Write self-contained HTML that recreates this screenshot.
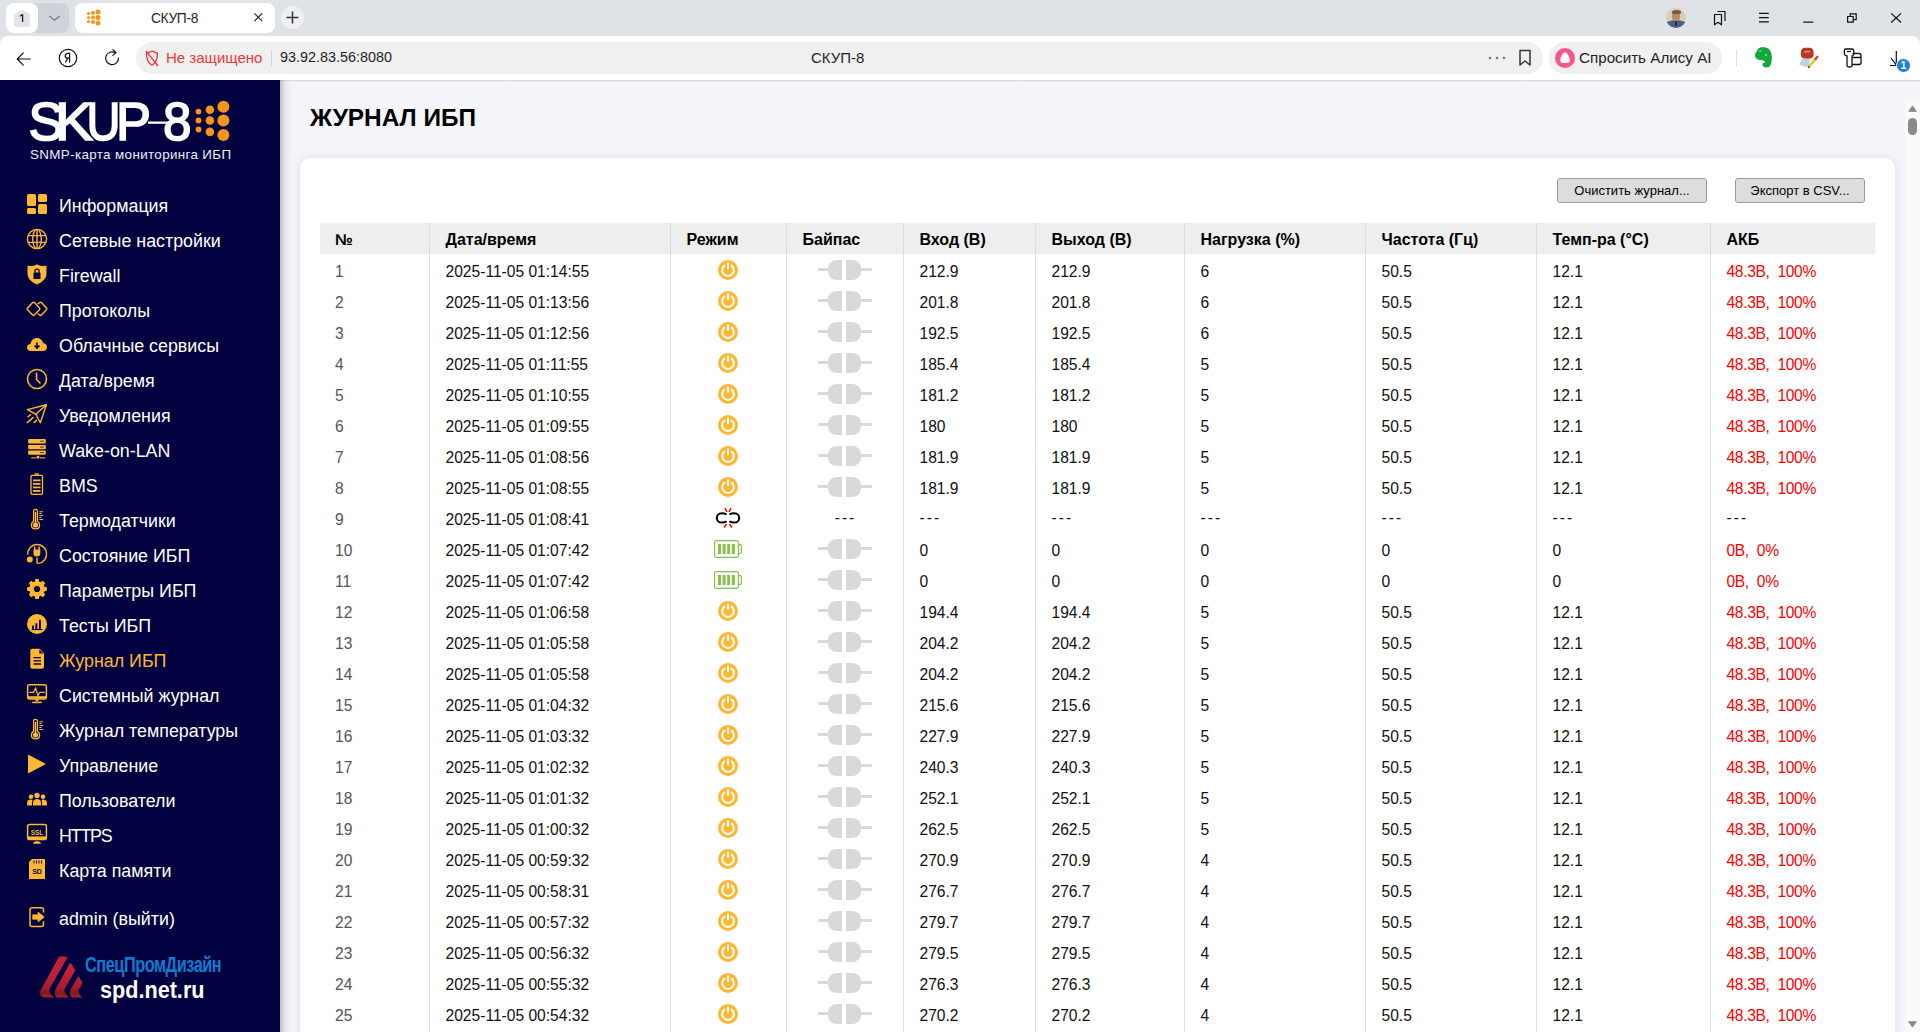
<!DOCTYPE html>
<html><head><meta charset="utf-8">
<style>
*{box-sizing:border-box;margin:0;padding:0}
html,body{width:1920px;height:1032px;overflow:hidden;font-family:"Liberation Sans",sans-serif;background:#fff}
.abs{position:absolute}
/* browser chrome */
#tabbar{position:absolute;left:0;top:0;width:1920px;height:36px;background:#dfe2e7}
#addr{position:absolute;left:0;top:36px;width:1920px;height:44px;background:#fff;border-radius:8px 8px 0 0}
.pill{position:absolute;background:#f0f0f0;border-radius:16px}
.ctext{position:absolute;font-size:15px;color:#1f1f1f;white-space:nowrap;line-height:17px}
/* sidebar */
#side{position:absolute;left:0;top:80px;width:280px;height:952px;background:#010140}
#main{position:absolute;left:280px;top:80px;width:1640px;height:952px;background:#f4f5fa;overflow:hidden}
#shadowL{position:absolute;left:0;top:0;width:12px;height:952px;background:linear-gradient(to right,rgba(0,0,0,0.22),rgba(0,0,0,0.06) 40%,rgba(0,0,0,0))}
#shadowT{position:absolute;left:0;top:0;width:1640px;height:2px;background:linear-gradient(to bottom,rgba(0,0,0,0.11) 0 1px,rgba(0,0,0,0.03) 1px 2px)}
#scroll{position:absolute;left:1905px;top:100px;width:15px;height:932px;background:#fafafa}
.mi{position:absolute;left:0;width:280px;height:35px}
.mi svg{position:absolute;left:26px;top:6px}
.mi span{position:absolute;left:59px;top:8.5px;font-size:17.85px;line-height:20px;color:#fff;white-space:nowrap}
.mi.act span{color:#fdb733}
/* card */
h1{position:absolute;left:30px;top:24px;font-size:24.4px;font-weight:bold;color:#000;line-height:28px;letter-spacing:0px}
#card{position:absolute;left:20px;top:78px;width:1595px;height:900px;background:#fff;border-radius:10px;box-shadow:0 0 10px rgba(0,0,0,0.10)}
.btn{position:absolute;top:20px;height:25px;background:#dddddd;border:1px solid #9a9a9a;border-radius:3px;font-size:13px;color:#000;text-align:center;line-height:23px;white-space:nowrap}
table{position:absolute;left:20px;top:65px;border-collapse:collapse;table-layout:fixed;width:1555px}
th{background:#eeeeee;height:31px;font-size:16px;font-weight:bold;text-align:left;padding:3px 0 0 16px;color:#000;border-left:1px solid #dddddd;white-space:nowrap}
td{height:31px;font-size:15.6px;text-align:left;padding:4px 0 0 16px;color:#111;border-left:1px solid #dddddd;white-space:nowrap}
th:first-child,td:first-child{border-left:none;padding-left:15px}
td.c1{color:#555}
td.cc{text-align:center;padding:0}
td.akb{color:#f00;letter-spacing:-0.35px}
td.akb.blk{color:#111}
svg.pw,svg.bat,svg.brk{display:block;margin:0 auto}
.plug{display:block;position:relative;width:54px;height:20px;margin:0 auto}
.plug b{position:absolute;background:#d9d9d9}
.plug .l1{left:0;top:8.3px;width:11px;height:3.4px}
.plug .l2{left:43px;top:8.3px;width:11px;height:3.4px}
.plug .h1{left:10.4px;top:0;width:14.6px;height:20px;border-radius:9px 0 0 9px/8px 0 0 8px}
.plug .h2{left:28.8px;top:0;width:15.2px;height:20px;border-radius:0 9px 9px 0/0 8px 8px 0}
.dsh{letter-spacing:2px;position:relative;top:-2px}
td.cc .dsh{margin-right:-2px;top:0px}
</style></head><body>
<div id="tabbar">
  <div class="abs" style="left:6px;top:3px;width:63px;height:30px;background:#cfd2d8;border-radius:8px"></div>
  <div class="abs" style="left:6px;top:3px;width:32px;height:30px;background:#fff;border-radius:8px"></div>
  <svg class="abs" style="left:13px;top:9px" width="18" height="19" viewBox="0 0 18 19"><path d="M9 0.8L15.5 4.2Q17 5 17 6.8V15.5Q17 18 14.5 18H3.5Q1 18 1 15.5V6.8Q1 5 2.5 4.2Z" fill="#e3e5e9"/></svg>
  <svg class="abs" style="left:14px;top:10px" width="16" height="17" viewBox="0 0 16 17"><path d="M8.6 4.2V12M8.6 4.4L6 6.2" fill="none" stroke="#222" stroke-width="1.3"/></svg>
  <svg class="abs" style="left:48px;top:14px" width="13" height="8" viewBox="0 0 13 8"><path d="M1.2 2L6.5 6.2L11.8 2" fill="none" stroke="#777a80" stroke-width="1.3"/></svg>
  <div class="abs" style="left:75px;top:3px;width:200px;height:30px;background:#fff;border-radius:8px"></div>
  <svg class="abs" style="left:86px;top:9px" width="17" height="17" viewBox="0 0 17 17">
    <g fill="#f7941d"><circle cx="2.5" cy="4.5" r="1.6"/><circle cx="2.5" cy="8.5" r="1.6"/><circle cx="2.5" cy="12.5" r="1.6"/><circle cx="7" cy="4" r="2"/><circle cx="7" cy="8.5" r="2"/><circle cx="7" cy="13" r="2"/><circle cx="12" cy="3" r="2.5"/><circle cx="12" cy="8.5" r="2.5"/><circle cx="12" cy="14" r="2.5"/></g></svg>
  <div class="ctext" style="left:151px;top:10px;font-size:13.8px;letter-spacing:-0.35px">СКУП-8</div>
  <svg class="abs" style="left:252px;top:11px" width="13" height="13" viewBox="0 0 13 13"><path d="M2.4 2.4L10.2 10.2M10.2 2.4L2.4 10.2" stroke="#222" stroke-width="1.2"/></svg>
  <div class="abs" style="left:281px;top:6px;width:23px;height:23px;background:#eef0f3;border-radius:50%"></div>
  <svg class="abs" style="left:285px;top:10px" width="15" height="15" viewBox="0 0 15 15"><path d="M7.5 1.5V13.5M1.5 7.5H13.5" stroke="#333" stroke-width="1.5"/></svg>
  <!-- right window controls -->
  <div class="abs" style="left:1666px;top:8px;width:20px;height:20px;border-radius:50%;overflow:hidden;background:#d8cdb8">
    <div class="abs" style="left:-2px;top:12px;width:24px;height:12px;border-radius:50% 50% 0 0;background:#4d5c86"></div>
    <div class="abs" style="left:6px;top:3px;width:8px;height:10px;border-radius:45%;background:#b98a6c"></div>
    <div class="abs" style="left:5.5px;top:2px;width:9px;height:4px;border-radius:50% 50% 20% 20%;background:#7a5a3e"></div>
    <div class="abs" style="left:9px;top:13px;width:2px;height:5px;background:#2b2b3a"></div>
  </div>
  <svg class="abs" style="left:1710px;top:8px" width="20" height="20" viewBox="0 0 20 20"><path d="M4.5 6.5H11.5V16.8L8 14.3L4.5 16.8Z M7.5 3.5H15V13" fill="none" stroke="#111" stroke-width="1.2" stroke-linejoin="round"/></svg>
  <svg class="abs" style="left:1754px;top:8px" width="20" height="20" viewBox="0 0 20 20"><path d="M5 5.4H14.8M5 9.6H14.8M5 13.8H14.8" stroke="#111" stroke-width="1.2"/></svg>
  <svg class="abs" style="left:1798px;top:8px" width="20" height="20" viewBox="0 0 20 20"><path d="M5.3 14.1H15.2" stroke="#111" stroke-width="1.2"/></svg>
  <svg class="abs" style="left:1842px;top:8px" width="20" height="20" viewBox="0 0 20 20"><path d="M5.6 8.5H11.2V14.1H5.6Z M8.2 8.5V5.9H14.2V11.6H11.2" fill="none" stroke="#111" stroke-width="1.2"/></svg>
  <svg class="abs" style="left:1886px;top:8px" width="20" height="20" viewBox="0 0 20 20"><path d="M5.2 5.4L15 14.5M15 5.4L5.2 14.5" stroke="#111" stroke-width="1.2"/></svg>
</div>
<div class="abs" style="left:0;top:36px;width:1920px;height:14px;background:#dfe2e7"></div>
<div id="addr">
  <svg class="abs" style="left:16px;top:14px" width="18" height="18" viewBox="0 0 18 18"><path d="M1.2 9H14.8M7.6 2.6L1.2 9L7.6 15.4" fill="none" stroke="#111" stroke-width="1.2"/></svg>
  <svg class="abs" style="left:58px;top:12px" width="20" height="20" viewBox="0 0 20 20"><circle cx="10" cy="10" r="8.7" fill="none" stroke="#111" stroke-width="1.2"/><path d="M11.6 14.6V5.4H10C8.2 5.4 7.2 6.4 7.2 7.9C7.2 9.3 8.2 10.2 10 10.2H11.6M9.8 10.2L7.4 14.4" fill="none" stroke="#111" stroke-width="1.2"/></svg>
  <svg class="abs" style="left:104px;top:12px" width="18" height="20" viewBox="0 0 18 20"><path d="M14.4 9.6A6.4 6.4 0 1 1 11.4 4.8" fill="none" stroke="#111" stroke-width="1.2"/><path d="M8.6 1.4L12 4.8L8.4 7.6" fill="none" stroke="#111" stroke-width="1.2"/></svg>
  <div class="pill" style="left:136px;top:6px;width:1407px;height:32px"></div>
  <svg class="abs" style="left:143px;top:13px" width="18" height="19" viewBox="0 0 18 19"><path d="M9 2.2L14.5 4.3C14.6 10 13 13.8 9 16.2C5 13.8 3.4 10 3.5 4.3Z" fill="none" stroke="#f0353a" stroke-width="1.3"/><path d="M3 2L15 17" stroke="#f0353a" stroke-width="1.3"/></svg>
  <div class="ctext" style="left:166px;top:13px;color:#f0353a">Не защищено</div>
  <div class="abs" style="left:271px;top:14px;width:1px;height:16px;background:#d4d4d4"></div>
  <div class="ctext" style="left:280px;top:13px;font-size:14.4px;color:#1f1f1f">93.92.83.56:8080</div>
  <div class="ctext" style="left:811px;top:13px;font-size:15px;color:#1f1f1f">СКУП-8</div>
  <svg class="abs" style="left:1487px;top:20px" width="20" height="4" viewBox="0 0 20 4"><g fill="#777"><circle cx="3" cy="2" r="1.3"/><circle cx="10" cy="2" r="1.3"/><circle cx="17" cy="2" r="1.3"/></g></svg>
  <svg class="abs" style="left:1516px;top:12px" width="18" height="20" viewBox="0 0 18 20"><path d="M4 2.5H14V17L9 13L4 17Z" fill="none" stroke="#333" stroke-width="1.5" stroke-linejoin="round"/></svg>
  <div class="pill" style="left:1549px;top:6px;width:173px;height:32px"></div>
  <svg class="abs" style="left:1555px;top:12px" width="20" height="20" viewBox="0 0 20 20"><circle cx="10" cy="10" r="10" fill="#f7568e"/><path d="M10 4.3C7.5 4.3 5.2 10 5.2 12.5C5.2 14.5 7 15 10 15C13 15 14.8 14.5 14.8 12.5C14.8 10 12.5 4.3 10 4.3Z" fill="#fff"/></svg>
  <div class="ctext" style="left:1579px;top:13px;font-size:15.2px;color:#1f1f1f">Спросить Алису AI</div>
  <div class="abs" style="left:1736px;top:14px;width:1px;height:17px;background:#ddd"></div>
  <svg class="abs" style="left:1752px;top:10px" width="22" height="24" viewBox="0 0 22 24"><path d="M6.5 2.5C7.5 1.5 9 1.2 11 1.2C15.5 1.2 19.8 3.5 19.8 11C19.8 17 19 21.5 14.5 21.5C12 21.5 10.5 20.5 10.5 18.5C10.5 17 11.8 16.2 13.5 16.5C12.5 15 11.5 14 9 14C5.5 14 3 12 3 9.5C3 8 3.5 7 4.5 6.3Z" fill="#14a83a"/><path d="M4 6.5L7.5 6.5L7 2.7Z" fill="#0c7f2a"/><path d="M6.3 5.8C7.5 5 8.6 4.8 9.5 5" stroke="#fff" stroke-width="0.7" fill="none"/><circle cx="14" cy="9" r="0.8" fill="#fff"/></svg>
  <svg class="abs" style="left:1796px;top:10px" width="24" height="24" viewBox="0 0 24 24"><path d="M3 18.5L6.5 12.4H14L13 20.8H8.5Z" fill="#c5d0de"/><path d="M9 1.8H13.5C16 1.8 17.6 3.6 17.6 6.5V8.5C17.6 11 16 12.6 13.5 12.6H9C6.5 12.6 4.8 11 4.8 8.5V6.5C4.8 3.6 6.5 1.8 9 1.8Z" fill="#b43a22"/><path d="M8.5 6.5C10 5.5 12 5.2 14 6" stroke="#f0b8a0" stroke-width="1.2" fill="none"/><path d="M13 20.5L20 12.5" stroke="#e8c83a" stroke-width="2.8" stroke-linecap="round"/><path d="M19.5 13L21.3 11" stroke="#d8483e" stroke-width="2.6" stroke-linecap="round"/><circle cx="12.7" cy="21" r="0.9" fill="#444"/></svg>
  <svg class="abs" style="left:1840px;top:10px" width="24" height="24" viewBox="0 0 24 24"><path d="M5.5 3H12C13 3 13.8 3.8 13.8 4.8V8C13.8 9 13 9.6 12 10V19.5C12 20.5 11 21 9.5 21C8 21 7 20.5 7 19.5V10C5.5 9.6 4.4 9 4.4 8V4.8C4.4 3.8 4.8 3 5.5 3Z" fill="none" stroke="#111" stroke-width="1.3" stroke-linejoin="round"/><path d="M7 5.5H11" stroke="#111" stroke-width="1.2"/><path d="M12.5 7.5H19C20.2 7.5 21 8.3 21 9.5V16.5C21 17.7 20.2 18.5 19 18.5H12.2M12.2 11.5H21" fill="none" stroke="#111" stroke-width="1.3" stroke-linejoin="round"/></svg>
  <svg class="abs" style="left:1884px;top:10px" width="24" height="24" viewBox="0 0 24 24"><path d="M12.3 5V19M7 12L12.3 19L17 13.5M6 19.5H12" fill="none" stroke="#111" stroke-width="1.2"/></svg>
  <div class="abs" style="left:1896px;top:21.5px;width:15px;height:15px;border-radius:50%;background:#1a7fe0;border:1.2px solid #fff;color:#fff;font-size:10.5px;font-weight:bold;line-height:13px;text-align:center">1</div>
</div>

<div id="side">
<div class="abs" style="left:0;top:0;width:280px;height:90px">
<svg class="abs" style="left:0;top:0" width="190" height="70" viewBox="0 0 190 70"><g font-family="Liberation Sans" font-weight="normal" font-size="54" fill="#fff" stroke="#fff" stroke-width="1.7" stroke-linejoin="miter"><text x="28.5" y="60" textLength="35" lengthAdjust="spacingAndGlyphs">S</text><text x="55" y="60" textLength="38" lengthAdjust="spacingAndGlyphs">K</text><text x="86.5" y="60" textLength="34" lengthAdjust="spacingAndGlyphs">U</text><text x="116" y="60" textLength="35" lengthAdjust="spacingAndGlyphs">P</text><text x="163" y="60" textLength="28.5" lengthAdjust="spacingAndGlyphs">8</text></g><rect x="148" y="41.5" width="22" height="2.3" fill="#fff"/></svg>
<svg class="abs" style="left:190px;top:18px" width="45" height="45" viewBox="0 0 45 45"><g fill="#f7941d"><circle cx="8.5" cy="13.6" r="2.9"/><circle cx="8.5" cy="22.5" r="2.9"/><circle cx="8.5" cy="31.5" r="2.9"/><circle cx="19.9" cy="11.8" r="4.3"/><circle cx="19.9" cy="22.5" r="4.3"/><circle cx="19.9" cy="33.9" r="4.3"/><circle cx="33.4" cy="8.8" r="6"/><circle cx="33.4" cy="22.5" r="6"/><circle cx="33.4" cy="36.9" r="6"/></g></svg>
<div class="abs" style="left:30px;top:67px;font-size:13.4px;color:#eeeef6;line-height:15px;letter-spacing:0.36px;white-space:nowrap">SNMP-карта мониторинга ИБП</div>
</div>
<div class="mi" style="top:107px"><svg width="22" height="22" viewBox="0 0 22 22"><g fill="#fdb733"><rect x="1" y="1" width="9" height="12" rx="1.5"/><rect x="12" y="1" width="9" height="8" rx="1.5"/><rect x="1" y="15" width="9" height="6" rx="1.5"/><rect x="12" y="11" width="9" height="10" rx="1.5"/></g></svg><span>Информация</span></div>
<div class="mi" style="top:142px"><svg width="22" height="22" viewBox="0 0 22 22"><g fill="none" stroke="#fdb733" stroke-width="1.4"><circle cx="11" cy="11" r="9.6"/><ellipse cx="11" cy="11" rx="4.3" ry="9.6"/><path d="M11 1.4V20.6M2.3 7.6H19.7M2.3 14.4H19.7"/></g></svg><span>Сетевые настройки</span></div>
<div class="mi" style="top:177px"><svg width="22" height="22" viewBox="0 0 22 22"><path d="M11 1.2C13 2.8 16.5 3.2 20.5 2.8V10.5C20.5 15.5 16.5 19 11 21.5C5.5 19 1.5 15.5 1.5 10.5V2.8C5.5 3.2 9 2.8 11 1.2Z" fill="#fdb733"/><rect x="7.5" y="9.6" width="7" height="6.4" rx="0.6" fill="#010140"/><path d="M8.9 9.8V8.2C8.9 6.9 9.8 6.1 11 6.1C12.2 6.1 13.1 6.9 13.1 8.2V9.8" fill="none" stroke="#010140" stroke-width="1.3"/></svg><span>Firewall</span></div>
<div class="mi" style="top:212px"><svg width="22" height="22" viewBox="0 0 22 22"><g fill="none" stroke="#fdb733" stroke-width="1.5" stroke-linejoin="round" stroke-linecap="round"><path d="M6.6 4.6Q7.5 3.8 8.4 4.6L13.4 9.9Q14.2 10.8 13.4 11.7L8.4 17Q7.5 17.8 6.6 17L1.6 11.7Q0.8 10.8 1.6 9.9Z"/><path d="M12.2 5.6L13.6 4.6Q14.5 3.8 15.4 4.6L20.4 9.9Q21.2 10.8 20.4 11.7L15.4 17Q14.5 17.8 13.6 17L12.2 16"/></g></svg><span>Протоколы</span></div>
<div class="mi" style="top:247px"><svg width="22" height="22" viewBox="0 0 22 22"><path d="M5 18C2.5 18 1 16.5 1 14.5C1 12.5 2.5 11 4.5 11C5 7.5 7.5 5 11 5C14 5 16.5 7 17.2 10C19.5 10.2 21 12 21 14.2C21 16.5 19.5 18 17 18Z" fill="#fdb733"/><path d="M11 9.5V15M8.5 12.5L11 15L13.5 12.5" fill="none" stroke="#010140" stroke-width="1.6"/></svg><span>Облачные сервисы</span></div>
<div class="mi" style="top:282px"><svg width="22" height="22" viewBox="0 0 22 22"><g fill="none" stroke="#fdb733" stroke-width="1.6"><circle cx="11" cy="11" r="9.5"/><path d="M10.5 4.5V11.5L14.5 15.5"/></g></svg><span>Дата/время</span></div>
<div class="mi" style="top:317px"><svg width="22" height="22" viewBox="0 0 22 22"><g fill="none" stroke="#fdb733" stroke-width="1.4" stroke-linejoin="round" stroke-linecap="round"><path d="M1.3 6.6L20.4 1.8L14.3 19.8L9.8 11.2Z"/><path d="M20.4 1.8L9.8 11.2"/><path d="M2 13.8L4.6 11.6M1.3 19.6L7.2 14.4M8 19.6L10.6 17.4"/></g></svg><span>Уведомления</span></div>
<div class="mi" style="top:352px"><svg width="22" height="22" viewBox="0 0 22 22"><g fill="#fdb733"><rect x="2.1" y="0.9" width="17.7" height="4.5" rx="1"/><rect x="2.1" y="6.9" width="17.7" height="4.3" rx="1"/><rect x="2.1" y="12.4" width="17.7" height="4.4" rx="1"/><rect x="10.6" y="17.8" width="2.7" height="2.8"/><rect x="5.2" y="19.3" width="4.7" height="1.1"/><rect x="14" y="19.3" width="5.2" height="1.1"/></g><g stroke="#010140" stroke-width="0.7"><path d="M14 3.2H18M14 9H18M14 14.6H18"/></g></svg><span>Wake-on-LAN</span></div>
<div class="mi" style="top:387px"><svg width="22" height="22" viewBox="0 0 22 22"><g fill="none" stroke="#fdb733" stroke-width="1.3"><rect x="5" y="2.3" width="11.5" height="19" rx="1"/><path d="M8.5 1H13"/></g><g fill="#fdb733"><rect x="7" y="6.5" width="7.5" height="1.8"/><rect x="7" y="10" width="7.5" height="1.8"/><rect x="7" y="13.5" width="7.5" height="1.8"/><rect x="7" y="17" width="7.5" height="1.8"/></g></svg><span>BMS</span></div>
<div class="mi" style="top:422px"><svg width="22" height="22" viewBox="0 0 22 22"><path d="M7.6 13.4V3.2C7.6 2 8.4 1.3 9.5 1.3C10.6 1.3 11.4 2 11.4 3.2V13.4C12.9 14.2 13.6 15.4 13.6 16.9C13.6 19.2 11.8 20.8 9.5 20.8C7.2 20.8 5.4 19.2 5.4 16.9C5.4 15.4 6.1 14.2 7.6 13.4Z" fill="none" stroke="#fdb733" stroke-width="1.3"/><rect x="8.8" y="4" width="1.4" height="11.5" fill="#fdb733"/><circle cx="9.5" cy="17" r="2.6" fill="#fdb733"/><g stroke="#fdb733" stroke-width="1.1"><path d="M13.3 3.7H17.1M13.3 5.5H15.6M13.3 7.5H17.1M13.3 9.5H15.6M13.3 11.5H17.1"/></g></svg><span>Термодатчики</span></div>
<div class="mi" style="top:457px"><svg width="22" height="22" viewBox="0 0 22 22"><path d="M1.6 11.6A9.5 9.5 0 1 1 12.6 20.4" fill="none" stroke="#fdb733" stroke-width="1.4"/><path d="M11 14.4V19.2Q11 20.5 12.6 20.4" fill="none" stroke="#fdb733" stroke-width="1.4"/><path d="M7.5 6.6H14.3V11C14.3 12.4 13 13.4 10.9 13.4C8.8 13.4 7.5 12.4 7.5 11Z" fill="#fdb733"/><rect x="7.9" y="3.6" width="1.5" height="3.4" rx="0.7" fill="#fdb733"/><rect x="12.4" y="3.6" width="1.5" height="3.4" rx="0.7" fill="#fdb733"/><circle cx="3.8" cy="16.6" r="3" fill="#fdb733"/></svg><span>Состояние ИБП</span></div>
<div class="mi" style="top:492px"><svg width="22" height="22" viewBox="0 0 22 22"><path d="M8.24 4.35 L9.43 3.97 L9.75 1.68 L12.25 1.68 L12.57 3.97 L13.76 4.35 L14.86 4.92 L16.70 3.53 L18.47 5.30 L17.08 7.14 L17.65 8.24 L18.03 9.43 L20.32 9.75 L20.32 12.25 L18.03 12.57 L17.65 13.76 L17.08 14.86 L18.47 16.70 L16.70 18.47 L14.86 17.08 L13.76 17.65 L12.57 18.03 L12.25 20.32 L9.75 20.32 L9.43 18.03 L8.24 17.65 L7.14 17.08 L5.30 18.47 L3.53 16.70 L4.92 14.86 L4.35 13.76 L3.97 12.57 L1.68 12.25 L1.68 9.75 L3.97 9.43 L4.35 8.24 L4.92 7.14 L3.53 5.30 L5.30 3.53 L7.14 4.92Z" fill="#fdb733" stroke="#fdb733" stroke-width="1.2" stroke-linejoin="round"/><circle cx="11" cy="11" r="3.1" fill="#010140"/></svg><span>Параметры ИБП</span></div>
<div class="mi" style="top:527px"><svg width="22" height="22" viewBox="0 0 22 22"><circle cx="11" cy="11" r="10" fill="#fdb733"/><g fill="#010140"><rect x="6" y="12.6" width="1.9" height="3.6"/><rect x="9.4" y="10.3" width="1.9" height="5.9"/><rect x="13" y="6.8" width="1.9" height="9.4"/><rect x="5.6" y="16" width="10.8" height="1.1"/></g></svg><span>Тесты ИБП</span></div>
<div class="mi act" style="top:562px"><svg width="22" height="22" viewBox="0 0 22 22"><path d="M6.3 0.8H13.6L18 5.2V18.8C18 20 17.2 20.8 16 20.8H6.3C5.1 20.8 4.3 20 4.3 18.8V2.8C4.3 1.6 5.1 0.8 6.3 0.8Z" fill="#fdb733"/><path d="M13.4 1.6V5.6H17.4Z" fill="#010140"/><g stroke="#010140" stroke-width="1.3"><path d="M7.5 9.6H15M7.5 12.8H15M7.5 16H15"/></g></svg><span>Журнал ИБП</span></div>
<div class="mi" style="top:597px"><svg width="22" height="22" viewBox="0 0 22 22"><path d="M3.6 1.8H18.4C19.6 1.8 20.4 2.6 20.4 3.8V14C20.4 15.2 19.6 16 18.4 16H3.6C2.4 16 1.6 15.2 1.6 14V3.8C1.6 2.6 2.4 1.8 3.6 1.8Z" fill="none" stroke="#fdb733" stroke-width="1.5"/><rect x="2" y="13.2" width="18" height="2.4" fill="#fdb733"/><path d="M3.2 9.3H7.6L9.6 5.3L12 12.6L13.8 9.3H18.8" fill="none" stroke="#fdb733" stroke-width="1.3"/><rect x="9.6" y="16" width="2.8" height="2.2" fill="#fdb733"/><rect x="6.2" y="18.6" width="9.6" height="1.6" fill="#fdb733"/></svg><span>Системный журнал</span></div>
<div class="mi" style="top:632px"><svg width="22" height="22" viewBox="0 0 22 22"><path d="M7.6 13.4V3.2C7.6 2 8.4 1.3 9.5 1.3C10.6 1.3 11.4 2 11.4 3.2V13.4C12.9 14.2 13.6 15.4 13.6 16.9C13.6 19.2 11.8 20.8 9.5 20.8C7.2 20.8 5.4 19.2 5.4 16.9C5.4 15.4 6.1 14.2 7.6 13.4Z" fill="none" stroke="#fdb733" stroke-width="1.3"/><rect x="8.8" y="4" width="1.4" height="11.5" fill="#fdb733"/><circle cx="9.5" cy="17" r="2.6" fill="#fdb733"/><g stroke="#fdb733" stroke-width="1.1"><path d="M13.3 3.7H17.1M13.3 5.5H15.6M13.3 7.5H17.1M13.3 9.5H15.6M13.3 11.5H17.1"/></g></svg><span>Журнал температуры</span></div>
<div class="mi" style="top:667px"><svg width="22" height="22" viewBox="0 0 22 22"><path d="M2 1.5V20.5L20 11Z" fill="#fdb733"/></svg><span>Управление</span></div>
<div class="mi" style="top:702px"><svg width="22" height="22" viewBox="0 0 22 22"><g fill="#fdb733"><circle cx="11" cy="7.4" r="2.7"/><circle cx="5" cy="8.8" r="2.3"/><circle cx="17" cy="8.8" r="2.3"/><path d="M7 17.4V14.4C7 12.4 8.8 10.9 11 10.9C13.2 10.9 15 12.4 15 14.4V17.4Z"/><path d="M1.1 17.4V14.6C1.1 12.9 2.6 11.6 5 11.6C5.7 11.6 6.3 11.8 6.7 12.1C6.2 12.8 6 13.6 6 14.6V17.4Z"/><path d="M20.9 17.4V14.6C20.9 12.9 19.4 11.6 17 11.6C16.3 11.6 15.7 11.8 15.3 12.1C15.8 12.8 16 13.6 16 14.6V17.4Z"/></g></svg><span>Пользователи</span></div>
<div class="mi" style="top:737px"><svg width="22" height="22" viewBox="0 0 22 22"><path d="M3.7 1.6H18.3C19.5 1.6 20.4 2.5 20.4 3.7V14.4C20.4 15.6 19.5 16.5 18.3 16.5H3.7C2.5 16.5 1.6 15.6 1.6 14.4V3.7C1.6 2.5 2.5 1.6 3.7 1.6Z" fill="none" stroke="#fdb733" stroke-width="1.5"/><rect x="2" y="13.4" width="18" height="2.6" fill="#fdb733"/><text x="11" y="11.6" font-family="Liberation Sans" font-weight="bold" font-size="8" fill="#fdb733" text-anchor="middle" textLength="12.5" lengthAdjust="spacingAndGlyphs">SSL</text><path d="M7 20.8C7.5 18.8 9 18.2 11 18.2C13 18.2 14.5 18.8 15 20.8Z" fill="#fdb733"/></svg><span style="letter-spacing:-1.2px">HTTPS</span></div>
<div class="mi" style="top:772px"><svg width="22" height="22" viewBox="0 0 22 22"><path d="M6 1H19V21H3V4Z" fill="#fdb733"/><g stroke="#010140" stroke-width="0.9"><path d="M8 2.5V5.5M10.5 2.5V5.5M13 2.5V5.5M15.5 2.5V5.5"/></g><text x="11" y="15.5" font-family="Liberation Sans" font-weight="bold" font-size="7" fill="#010140" text-anchor="middle">SD</text></svg><span>Карта памяти</span></div>
<div class="mi" style="top:820px"><svg width="22" height="22" viewBox="0 0 22 22"><path d="M17.5 6.5V3.8C17.5 2.7 16.6 1.8 15.5 1.8H6C4.9 1.8 4 2.7 4 3.8V18.4C4 19.5 4.9 20.4 6 20.4H15.5C16.6 20.4 17.5 19.5 17.5 18.4V15.2" fill="none" stroke="#fdb733" stroke-width="1.5"/><path d="M6.6 8.8H12V6L18.4 11L12 16.1V13.3H6.6Z" fill="#fdb733" stroke="#fdb733" stroke-width="0.6" stroke-linejoin="round"/></svg><span>admin (выйти)</span></div>
<svg class="abs" style="left:30px;top:865px" width="70" height="60" viewBox="0 0 70 60">
<defs><linearGradient id="rg" x1="0" y1="10" x2="0" y2="53" gradientUnits="userSpaceOnUse"><stop offset="0" stop-color="#b8242c"/><stop offset="0.25" stop-color="#c8203c"/><stop offset="0.75" stop-color="#a81f2e"/><stop offset="0.88" stop-color="#7a1b1f"/><stop offset="1" stop-color="#b42030"/></linearGradient></defs>
<g fill="url(#rg)"><path d="M29 11.8Q31 10.6 37.5 12.3L19.5 44Q18.6 48.5 24.5 52.6L14.5 52.6Q9 51 10.2 46Z"/><path d="M39.6 18.6Q40.6 17.6 41.4 18.8L45.3 25.5L34.5 44Q33.6 48.5 39.5 52.6L27.3 52.6Q24 51 25 45.3Z"/><path d="M48.5 31.1L52.6 37.8L48.8 44.8Q48 49 52.5 52.6L42.4 52.6Q39 51 40.1 45.3Z"/></g></svg>
<div class="abs" style="left:85px;top:872px;font-size:22px;font-weight:bold;color:#0f7bd0;line-height:26px;letter-spacing:-0.6px;transform:scaleX(0.74);transform-origin:0 0;white-space:nowrap">СпецПромДизайн</div>
<div class="abs" style="left:100px;top:896.5px;font-size:23px;font-weight:bold;color:#fff;line-height:26px;letter-spacing:0px;white-space:nowrap;transform:scaleX(0.94);transform-origin:0 0">spd.net.ru</div>
</div>

<div id="main">
  <div id="shadowT"></div>
  <h1>ЖУРНАЛ ИБП</h1>
  <div id="card">
    <div class="btn" style="left:1257px;width:150px">Очистить журнал...</div>
    <div class="btn" style="left:1435px;width:130px">Экспорт в CSV...</div>
    <table>
      <colgroup><col style="width:109px"><col style="width:241px"><col style="width:116px"><col style="width:117px"><col style="width:132px"><col style="width:149px"><col style="width:181px"><col style="width:171px"><col style="width:174px"><col style="width:165px"></colgroup>
      <thead><tr><th>№</th><th>Дата/время</th><th>Режим</th><th>Байпас</th><th>Вход (В)</th><th>Выход (В)</th><th>Нагрузка (%)</th><th>Частота (Гц)</th><th>Темп-ра (°C)</th><th>АКБ</th></tr></thead>
      <tbody>
<tr><td class="c1">1</td><td>2025-11-05 01:14:55</td><td class="cc"><svg class="pw" width="20" height="20" viewBox="0 0 20 20"><circle cx="10" cy="10" r="10" fill="#fdb733"/><path d="M7 5.2A5.8 5.8 0 1 0 13 5.2" fill="none" stroke="#fff" stroke-width="2"/><rect x="9" y="2.4" width="2" height="6.3" fill="#fff"/></svg></td><td class="cc"><i class="plug"><b class="l1"></b><b class="h1"></b><b class="h2"></b><b class="l2"></b></i></td><td>212.9</td><td>212.9</td><td>6</td><td>50.5</td><td>12.1</td><td class="akb">48.3В,&nbsp; 100%</td></tr>
<tr><td class="c1">2</td><td>2025-11-05 01:13:56</td><td class="cc"><svg class="pw" width="20" height="20" viewBox="0 0 20 20"><circle cx="10" cy="10" r="10" fill="#fdb733"/><path d="M7 5.2A5.8 5.8 0 1 0 13 5.2" fill="none" stroke="#fff" stroke-width="2"/><rect x="9" y="2.4" width="2" height="6.3" fill="#fff"/></svg></td><td class="cc"><i class="plug"><b class="l1"></b><b class="h1"></b><b class="h2"></b><b class="l2"></b></i></td><td>201.8</td><td>201.8</td><td>6</td><td>50.5</td><td>12.1</td><td class="akb">48.3В,&nbsp; 100%</td></tr>
<tr><td class="c1">3</td><td>2025-11-05 01:12:56</td><td class="cc"><svg class="pw" width="20" height="20" viewBox="0 0 20 20"><circle cx="10" cy="10" r="10" fill="#fdb733"/><path d="M7 5.2A5.8 5.8 0 1 0 13 5.2" fill="none" stroke="#fff" stroke-width="2"/><rect x="9" y="2.4" width="2" height="6.3" fill="#fff"/></svg></td><td class="cc"><i class="plug"><b class="l1"></b><b class="h1"></b><b class="h2"></b><b class="l2"></b></i></td><td>192.5</td><td>192.5</td><td>6</td><td>50.5</td><td>12.1</td><td class="akb">48.3В,&nbsp; 100%</td></tr>
<tr><td class="c1">4</td><td>2025-11-05 01:11:55</td><td class="cc"><svg class="pw" width="20" height="20" viewBox="0 0 20 20"><circle cx="10" cy="10" r="10" fill="#fdb733"/><path d="M7 5.2A5.8 5.8 0 1 0 13 5.2" fill="none" stroke="#fff" stroke-width="2"/><rect x="9" y="2.4" width="2" height="6.3" fill="#fff"/></svg></td><td class="cc"><i class="plug"><b class="l1"></b><b class="h1"></b><b class="h2"></b><b class="l2"></b></i></td><td>185.4</td><td>185.4</td><td>5</td><td>50.5</td><td>12.1</td><td class="akb">48.3В,&nbsp; 100%</td></tr>
<tr><td class="c1">5</td><td>2025-11-05 01:10:55</td><td class="cc"><svg class="pw" width="20" height="20" viewBox="0 0 20 20"><circle cx="10" cy="10" r="10" fill="#fdb733"/><path d="M7 5.2A5.8 5.8 0 1 0 13 5.2" fill="none" stroke="#fff" stroke-width="2"/><rect x="9" y="2.4" width="2" height="6.3" fill="#fff"/></svg></td><td class="cc"><i class="plug"><b class="l1"></b><b class="h1"></b><b class="h2"></b><b class="l2"></b></i></td><td>181.2</td><td>181.2</td><td>5</td><td>50.5</td><td>12.1</td><td class="akb">48.3В,&nbsp; 100%</td></tr>
<tr><td class="c1">6</td><td>2025-11-05 01:09:55</td><td class="cc"><svg class="pw" width="20" height="20" viewBox="0 0 20 20"><circle cx="10" cy="10" r="10" fill="#fdb733"/><path d="M7 5.2A5.8 5.8 0 1 0 13 5.2" fill="none" stroke="#fff" stroke-width="2"/><rect x="9" y="2.4" width="2" height="6.3" fill="#fff"/></svg></td><td class="cc"><i class="plug"><b class="l1"></b><b class="h1"></b><b class="h2"></b><b class="l2"></b></i></td><td>180</td><td>180</td><td>5</td><td>50.5</td><td>12.1</td><td class="akb">48.3В,&nbsp; 100%</td></tr>
<tr><td class="c1">7</td><td>2025-11-05 01:08:56</td><td class="cc"><svg class="pw" width="20" height="20" viewBox="0 0 20 20"><circle cx="10" cy="10" r="10" fill="#fdb733"/><path d="M7 5.2A5.8 5.8 0 1 0 13 5.2" fill="none" stroke="#fff" stroke-width="2"/><rect x="9" y="2.4" width="2" height="6.3" fill="#fff"/></svg></td><td class="cc"><i class="plug"><b class="l1"></b><b class="h1"></b><b class="h2"></b><b class="l2"></b></i></td><td>181.9</td><td>181.9</td><td>5</td><td>50.5</td><td>12.1</td><td class="akb">48.3В,&nbsp; 100%</td></tr>
<tr><td class="c1">8</td><td>2025-11-05 01:08:55</td><td class="cc"><svg class="pw" width="20" height="20" viewBox="0 0 20 20"><circle cx="10" cy="10" r="10" fill="#fdb733"/><path d="M7 5.2A5.8 5.8 0 1 0 13 5.2" fill="none" stroke="#fff" stroke-width="2"/><rect x="9" y="2.4" width="2" height="6.3" fill="#fff"/></svg></td><td class="cc"><i class="plug"><b class="l1"></b><b class="h1"></b><b class="h2"></b><b class="l2"></b></i></td><td>181.9</td><td>181.9</td><td>5</td><td>50.5</td><td>12.1</td><td class="akb">48.3В,&nbsp; 100%</td></tr>
<tr><td class="c1">9</td><td>2025-11-05 01:08:41</td><td class="cc"><svg class="brk" width="26" height="22" viewBox="0 0 26 22"><g fill="none" stroke="#000" stroke-width="2"><path d="M11.6 7.4C10 6.6 8.5 6.3 6.8 6.3C3.8 6.3 1.8 8.3 1.8 10.9C1.8 13.5 3.8 15.5 6.8 15.5C8.5 15.5 10 15.2 11.6 14.4"/><path d="M14.4 7.4C16 6.6 17.5 6.3 19.2 6.3C22.2 6.3 24.2 8.3 24.2 10.9C24.2 13.5 22.2 15.5 19.2 15.5C17.5 15.5 16 15.2 14.4 14.4"/></g><path d="M9.8 1.2L12 4.8M16.2 1.2L14 4.8M11.4 17L9.2 20.6M14.6 17L16.8 20.6" stroke="#f00" stroke-width="1.5"/></svg></td><td class="cc"><span class="dsh">---</span></td><td><span class="dsh">---</span></td><td><span class="dsh">---</span></td><td><span class="dsh">---</span></td><td><span class="dsh">---</span></td><td><span class="dsh">---</span></td><td class="akb blk"><span class="dsh">---</span></td></tr>
<tr><td class="c1">10</td><td>2025-11-05 01:07:42</td><td class="cc"><svg class="bat" width="28" height="18" viewBox="0 0 28 18"><rect x="0.6" y="0.6" width="23.8" height="16.8" rx="1.8" fill="none" stroke="#84c04a" stroke-width="1.2"/><path d="M24.4 4.6H26.2Q27.4 4.6 27.4 5.8V12.2Q27.4 13.4 26.2 13.4H24.4" fill="none" stroke="#84c04a" stroke-width="1.2"/><rect x="4" y="4" width="3" height="10" fill="#84c04a"/><rect x="8.6" y="4" width="3" height="10" fill="#84c04a"/><rect x="13.2" y="4" width="3" height="10" fill="#84c04a"/><rect x="17.8" y="4" width="3" height="10" fill="#84c04a"/></svg></td><td class="cc"><i class="plug"><b class="l1"></b><b class="h1"></b><b class="h2"></b><b class="l2"></b></i></td><td>0</td><td>0</td><td>0</td><td>0</td><td>0</td><td class="akb">0В,&nbsp; 0%</td></tr>
<tr><td class="c1">11</td><td>2025-11-05 01:07:42</td><td class="cc"><svg class="bat" width="28" height="18" viewBox="0 0 28 18"><rect x="0.6" y="0.6" width="23.8" height="16.8" rx="1.8" fill="none" stroke="#84c04a" stroke-width="1.2"/><path d="M24.4 4.6H26.2Q27.4 4.6 27.4 5.8V12.2Q27.4 13.4 26.2 13.4H24.4" fill="none" stroke="#84c04a" stroke-width="1.2"/><rect x="4" y="4" width="3" height="10" fill="#84c04a"/><rect x="8.6" y="4" width="3" height="10" fill="#84c04a"/><rect x="13.2" y="4" width="3" height="10" fill="#84c04a"/><rect x="17.8" y="4" width="3" height="10" fill="#84c04a"/></svg></td><td class="cc"><i class="plug"><b class="l1"></b><b class="h1"></b><b class="h2"></b><b class="l2"></b></i></td><td>0</td><td>0</td><td>0</td><td>0</td><td>0</td><td class="akb">0В,&nbsp; 0%</td></tr>
<tr><td class="c1">12</td><td>2025-11-05 01:06:58</td><td class="cc"><svg class="pw" width="20" height="20" viewBox="0 0 20 20"><circle cx="10" cy="10" r="10" fill="#fdb733"/><path d="M7 5.2A5.8 5.8 0 1 0 13 5.2" fill="none" stroke="#fff" stroke-width="2"/><rect x="9" y="2.4" width="2" height="6.3" fill="#fff"/></svg></td><td class="cc"><i class="plug"><b class="l1"></b><b class="h1"></b><b class="h2"></b><b class="l2"></b></i></td><td>194.4</td><td>194.4</td><td>5</td><td>50.5</td><td>12.1</td><td class="akb">48.3В,&nbsp; 100%</td></tr>
<tr><td class="c1">13</td><td>2025-11-05 01:05:58</td><td class="cc"><svg class="pw" width="20" height="20" viewBox="0 0 20 20"><circle cx="10" cy="10" r="10" fill="#fdb733"/><path d="M7 5.2A5.8 5.8 0 1 0 13 5.2" fill="none" stroke="#fff" stroke-width="2"/><rect x="9" y="2.4" width="2" height="6.3" fill="#fff"/></svg></td><td class="cc"><i class="plug"><b class="l1"></b><b class="h1"></b><b class="h2"></b><b class="l2"></b></i></td><td>204.2</td><td>204.2</td><td>5</td><td>50.5</td><td>12.1</td><td class="akb">48.3В,&nbsp; 100%</td></tr>
<tr><td class="c1">14</td><td>2025-11-05 01:05:58</td><td class="cc"><svg class="pw" width="20" height="20" viewBox="0 0 20 20"><circle cx="10" cy="10" r="10" fill="#fdb733"/><path d="M7 5.2A5.8 5.8 0 1 0 13 5.2" fill="none" stroke="#fff" stroke-width="2"/><rect x="9" y="2.4" width="2" height="6.3" fill="#fff"/></svg></td><td class="cc"><i class="plug"><b class="l1"></b><b class="h1"></b><b class="h2"></b><b class="l2"></b></i></td><td>204.2</td><td>204.2</td><td>5</td><td>50.5</td><td>12.1</td><td class="akb">48.3В,&nbsp; 100%</td></tr>
<tr><td class="c1">15</td><td>2025-11-05 01:04:32</td><td class="cc"><svg class="pw" width="20" height="20" viewBox="0 0 20 20"><circle cx="10" cy="10" r="10" fill="#fdb733"/><path d="M7 5.2A5.8 5.8 0 1 0 13 5.2" fill="none" stroke="#fff" stroke-width="2"/><rect x="9" y="2.4" width="2" height="6.3" fill="#fff"/></svg></td><td class="cc"><i class="plug"><b class="l1"></b><b class="h1"></b><b class="h2"></b><b class="l2"></b></i></td><td>215.6</td><td>215.6</td><td>5</td><td>50.5</td><td>12.1</td><td class="akb">48.3В,&nbsp; 100%</td></tr>
<tr><td class="c1">16</td><td>2025-11-05 01:03:32</td><td class="cc"><svg class="pw" width="20" height="20" viewBox="0 0 20 20"><circle cx="10" cy="10" r="10" fill="#fdb733"/><path d="M7 5.2A5.8 5.8 0 1 0 13 5.2" fill="none" stroke="#fff" stroke-width="2"/><rect x="9" y="2.4" width="2" height="6.3" fill="#fff"/></svg></td><td class="cc"><i class="plug"><b class="l1"></b><b class="h1"></b><b class="h2"></b><b class="l2"></b></i></td><td>227.9</td><td>227.9</td><td>5</td><td>50.5</td><td>12.1</td><td class="akb">48.3В,&nbsp; 100%</td></tr>
<tr><td class="c1">17</td><td>2025-11-05 01:02:32</td><td class="cc"><svg class="pw" width="20" height="20" viewBox="0 0 20 20"><circle cx="10" cy="10" r="10" fill="#fdb733"/><path d="M7 5.2A5.8 5.8 0 1 0 13 5.2" fill="none" stroke="#fff" stroke-width="2"/><rect x="9" y="2.4" width="2" height="6.3" fill="#fff"/></svg></td><td class="cc"><i class="plug"><b class="l1"></b><b class="h1"></b><b class="h2"></b><b class="l2"></b></i></td><td>240.3</td><td>240.3</td><td>5</td><td>50.5</td><td>12.1</td><td class="akb">48.3В,&nbsp; 100%</td></tr>
<tr><td class="c1">18</td><td>2025-11-05 01:01:32</td><td class="cc"><svg class="pw" width="20" height="20" viewBox="0 0 20 20"><circle cx="10" cy="10" r="10" fill="#fdb733"/><path d="M7 5.2A5.8 5.8 0 1 0 13 5.2" fill="none" stroke="#fff" stroke-width="2"/><rect x="9" y="2.4" width="2" height="6.3" fill="#fff"/></svg></td><td class="cc"><i class="plug"><b class="l1"></b><b class="h1"></b><b class="h2"></b><b class="l2"></b></i></td><td>252.1</td><td>252.1</td><td>5</td><td>50.5</td><td>12.1</td><td class="akb">48.3В,&nbsp; 100%</td></tr>
<tr><td class="c1">19</td><td>2025-11-05 01:00:32</td><td class="cc"><svg class="pw" width="20" height="20" viewBox="0 0 20 20"><circle cx="10" cy="10" r="10" fill="#fdb733"/><path d="M7 5.2A5.8 5.8 0 1 0 13 5.2" fill="none" stroke="#fff" stroke-width="2"/><rect x="9" y="2.4" width="2" height="6.3" fill="#fff"/></svg></td><td class="cc"><i class="plug"><b class="l1"></b><b class="h1"></b><b class="h2"></b><b class="l2"></b></i></td><td>262.5</td><td>262.5</td><td>5</td><td>50.5</td><td>12.1</td><td class="akb">48.3В,&nbsp; 100%</td></tr>
<tr><td class="c1">20</td><td>2025-11-05 00:59:32</td><td class="cc"><svg class="pw" width="20" height="20" viewBox="0 0 20 20"><circle cx="10" cy="10" r="10" fill="#fdb733"/><path d="M7 5.2A5.8 5.8 0 1 0 13 5.2" fill="none" stroke="#fff" stroke-width="2"/><rect x="9" y="2.4" width="2" height="6.3" fill="#fff"/></svg></td><td class="cc"><i class="plug"><b class="l1"></b><b class="h1"></b><b class="h2"></b><b class="l2"></b></i></td><td>270.9</td><td>270.9</td><td>4</td><td>50.5</td><td>12.1</td><td class="akb">48.3В,&nbsp; 100%</td></tr>
<tr><td class="c1">21</td><td>2025-11-05 00:58:31</td><td class="cc"><svg class="pw" width="20" height="20" viewBox="0 0 20 20"><circle cx="10" cy="10" r="10" fill="#fdb733"/><path d="M7 5.2A5.8 5.8 0 1 0 13 5.2" fill="none" stroke="#fff" stroke-width="2"/><rect x="9" y="2.4" width="2" height="6.3" fill="#fff"/></svg></td><td class="cc"><i class="plug"><b class="l1"></b><b class="h1"></b><b class="h2"></b><b class="l2"></b></i></td><td>276.7</td><td>276.7</td><td>4</td><td>50.5</td><td>12.1</td><td class="akb">48.3В,&nbsp; 100%</td></tr>
<tr><td class="c1">22</td><td>2025-11-05 00:57:32</td><td class="cc"><svg class="pw" width="20" height="20" viewBox="0 0 20 20"><circle cx="10" cy="10" r="10" fill="#fdb733"/><path d="M7 5.2A5.8 5.8 0 1 0 13 5.2" fill="none" stroke="#fff" stroke-width="2"/><rect x="9" y="2.4" width="2" height="6.3" fill="#fff"/></svg></td><td class="cc"><i class="plug"><b class="l1"></b><b class="h1"></b><b class="h2"></b><b class="l2"></b></i></td><td>279.7</td><td>279.7</td><td>4</td><td>50.5</td><td>12.1</td><td class="akb">48.3В,&nbsp; 100%</td></tr>
<tr><td class="c1">23</td><td>2025-11-05 00:56:32</td><td class="cc"><svg class="pw" width="20" height="20" viewBox="0 0 20 20"><circle cx="10" cy="10" r="10" fill="#fdb733"/><path d="M7 5.2A5.8 5.8 0 1 0 13 5.2" fill="none" stroke="#fff" stroke-width="2"/><rect x="9" y="2.4" width="2" height="6.3" fill="#fff"/></svg></td><td class="cc"><i class="plug"><b class="l1"></b><b class="h1"></b><b class="h2"></b><b class="l2"></b></i></td><td>279.5</td><td>279.5</td><td>4</td><td>50.5</td><td>12.1</td><td class="akb">48.3В,&nbsp; 100%</td></tr>
<tr><td class="c1">24</td><td>2025-11-05 00:55:32</td><td class="cc"><svg class="pw" width="20" height="20" viewBox="0 0 20 20"><circle cx="10" cy="10" r="10" fill="#fdb733"/><path d="M7 5.2A5.8 5.8 0 1 0 13 5.2" fill="none" stroke="#fff" stroke-width="2"/><rect x="9" y="2.4" width="2" height="6.3" fill="#fff"/></svg></td><td class="cc"><i class="plug"><b class="l1"></b><b class="h1"></b><b class="h2"></b><b class="l2"></b></i></td><td>276.3</td><td>276.3</td><td>4</td><td>50.5</td><td>12.1</td><td class="akb">48.3В,&nbsp; 100%</td></tr>
<tr><td class="c1">25</td><td>2025-11-05 00:54:32</td><td class="cc"><svg class="pw" width="20" height="20" viewBox="0 0 20 20"><circle cx="10" cy="10" r="10" fill="#fdb733"/><path d="M7 5.2A5.8 5.8 0 1 0 13 5.2" fill="none" stroke="#fff" stroke-width="2"/><rect x="9" y="2.4" width="2" height="6.3" fill="#fff"/></svg></td><td class="cc"><i class="plug"><b class="l1"></b><b class="h1"></b><b class="h2"></b><b class="l2"></b></i></td><td>270.2</td><td>270.2</td><td>4</td><td>50.5</td><td>12.1</td><td class="akb">48.3В,&nbsp; 100%</td></tr>
<tr><td class="c1">26</td><td>2025-11-05 00:53:32</td><td class="cc"><svg class="pw" width="20" height="20" viewBox="0 0 20 20"><circle cx="10" cy="10" r="10" fill="#fdb733"/><path d="M7 5.2A5.8 5.8 0 1 0 13 5.2" fill="none" stroke="#fff" stroke-width="2"/><rect x="9" y="2.4" width="2" height="6.3" fill="#fff"/></svg></td><td class="cc"><i class="plug"><b class="l1"></b><b class="h1"></b><b class="h2"></b><b class="l2"></b></i></td><td>262.5</td><td>262.5</td><td>4</td><td>50.5</td><td>12.1</td><td class="akb">48.3В,&nbsp; 100%</td></tr>
      </tbody>
    </table>
  </div>
  <div id="shadowL"></div>
</div>
<div id="scroll">
  <svg class="abs" style="left:3px;top:5px" width="9" height="7" viewBox="0 0 9 7"><path d="M4.5 0.8L8.4 6.4H0.6Z" fill="#8a8a8a" stroke="#8a8a8a" stroke-width="0.8" stroke-linejoin="round"/></svg>
  <div class="abs" style="left:3px;top:18px;width:9px;height:17px;border-radius:4.5px;background:#8a8a8a"></div>
  <svg class="abs" style="left:3px;top:921px" width="9" height="7" viewBox="0 0 9 7"><path d="M0.6 0.6H8.4L4.5 6.2Z" fill="#8a8a8a" stroke="#8a8a8a" stroke-width="0.8" stroke-linejoin="round"/></svg>
</div>
</body></html>
